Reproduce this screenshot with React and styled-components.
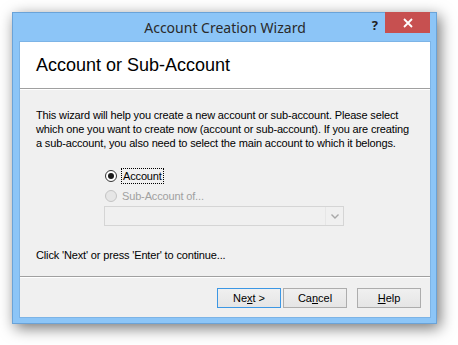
import React from "react"
import styled, { createGlobalStyle } from "styled-components"

const GlobalStyle = createGlobalStyle`
  html, body {
    margin: 0;
    background: #ffffff;
  }
`

const Desktop = styled.div`
  padding: 12px 0 0 12px;
  height: 345px;
  box-sizing: border-box;
`

const Window = styled.div`
  width: 425px;
  height: 312px;
  box-sizing: border-box;
  display: flex;
  flex-direction: column;
  background: #8cc5f7;
  border: 1px solid #6aa3d8;
  padding: 0 6px 6px 7px;
  box-shadow: 3px 4px 14px rgba(0, 0, 0, 0.55);
`

const TitleBar = styled.div`
  height: 29px;
  flex: none;
  display: flex;
  align-items: center;
  justify-content: center;
  position: relative;
  font-family: "Noto Sans", "Open Sans", sans-serif;
  font-size: 14px;
  color: #2a2a2a;
`

const HelpGlyph = styled.span`
  position: absolute;
  right: 52px;
  top: 3px;
  font-family: "Noto Sans", sans-serif;
  font-weight: 700;
  font-size: 13px;
  color: #222;
`

const CloseButton = styled.div`
  position: absolute;
  right: 0;
  top: -1px;
  width: 45px;
  height: 21px;
  background: #c75050;
  display: flex;
  align-items: center;
  justify-content: center;
`

const Client = styled.div`
  flex: 1;
  display: flex;
  flex-direction: column;
  background: #f0f0f0;
  box-shadow: 0 0 0 1px #7db4e6;
  font-family: "Liberation Sans", Arial, sans-serif;
  font-size: 11px;
  letter-spacing: -0.15px;
  color: #000;
`

const Header = styled.div`
  height: 46px;
  flex: none;
  background: #ffffff;
  display: flex;
  align-items: center;
  padding-left: 16px;
  font-size: 18px;
  letter-spacing: 0;
`

const Divider = styled.div`
  height: 1px;
  flex: none;
  background: #a0a0a0;
  border-bottom: 1px solid #ffffff;
`

const Body = styled.div`
  flex: 1;
  padding: 18px 0 0 16px;
`

const Intro = styled.p`
  margin: 0;
  line-height: 14px;
  white-space: nowrap;
`

const Choices = styled.div`
  margin: 18px 0 0 69px;
  display: flex;
  flex-direction: column;
  gap: 4px;
`

const Choice = styled.label`
  display: flex;
  align-items: center;
  gap: 5px;
  height: 16px;
  color: ${(p) => (p.disabled ? "#a0a0a0" : "#000")};
`

const RadioDot = styled.span`
  width: 12px;
  height: 12px;
  box-sizing: border-box;
  border-radius: 50%;
  border: 1px solid ${(p) => (p.disabled ? "#c4c4c4" : "#333")};
  background: ${(p) => (p.disabled ? "#e6e6e6" : "#fff")};
  display: flex;
  align-items: center;
  justify-content: center;
  &::after {
    content: "";
    width: 6px;
    height: 6px;
    border-radius: 50%;
    background: ${(p) => (p.checked ? "#1a1a1a" : "transparent")};
  }
`

const FocusLabel = styled.span`
  outline: 1px dotted #000;
  padding: 0 1px;
  line-height: 14px;
`

const Combo = styled.div`
  width: 240px;
  height: 20px;
  box-sizing: border-box;
  margin: -2px 0 0 -1px;
  border: 1px solid #d5d5d5;
  background: #f0f0f0;
  display: flex;
  justify-content: flex-end;
  align-items: center;
`

const ComboArrow = styled.div`
  width: 17px;
  height: 18px;
  border-left: 1px solid #e6e6e6;
  display: flex;
  align-items: center;
  justify-content: center;
`

const Hint = styled.p`
  margin: 23px 0 0;
`

const Footer = styled.div`
  height: 38px;
  flex: none;
  display: flex;
  align-items: center;
  justify-content: flex-end;
  padding-right: 9px;
  padding-top: 1px;
  gap: 2px;
`

const Button = styled.button`
  width: 64px;
  height: 20px;
  margin-left: ${(p) => (p.$spaced ? "8px" : "0")};
  box-sizing: border-box;
  border: 1px solid ${(p) => (p.$default ? "#3c97e4" : "#adadad")};
  background: linear-gradient(#f0f0f0, #e5e5e5);
  font-family: "Liberation Sans", Arial, sans-serif;
  font-size: 11px;
  color: #000;
  padding: 0;
  u {
    text-decoration: underline;
  }
`

function Close() {
  return (
    <svg width="10" height="10" viewBox="0 0 10 10">
      <path d="M1 1 L9 9 M9 1 L1 9" stroke="#fff" strokeWidth="1.8" />
    </svg>
  )
}

function Chevron() {
  return (
    <svg width="8" height="5" viewBox="0 0 8 5">
      <path d="M0.5 0.5 L4 4 L7.5 0.5" stroke="#a8a8a8" strokeWidth="1.4" fill="none" />
    </svg>
  )
}

export default function App() {
  return (
    <Desktop>
      <GlobalStyle />
      <Window>
        <TitleBar>
          Account Creation Wizard
          <HelpGlyph>?</HelpGlyph>
          <CloseButton>
            <Close />
          </CloseButton>
        </TitleBar>
        <Client>
          <Header>Account or Sub-Account</Header>
          <Divider />
          <Body>
            <Intro>
              This wizard will help you create a new account or sub-account. Please select
              <br />
              which one you want to create now (account or sub-account). If you are creating
              <br />
              a sub-account, you also need to select the main account to which it belongs.
            </Intro>
            <Choices>
              <Choice>
                <RadioDot checked />
                <FocusLabel>Account</FocusLabel>
              </Choice>
              <Choice disabled>
                <RadioDot disabled />
                Sub-Account of...
              </Choice>
              <Combo>
                <ComboArrow>
                  <Chevron />
                </ComboArrow>
              </Combo>
            </Choices>
            <Hint>Click 'Next' or press 'Enter' to continue...</Hint>
          </Body>
          <Divider />
          <Footer>
            <Button $default>
              Ne<u>x</u>t &gt;
            </Button>
            <Button>
              Ca<u>n</u>cel
            </Button>
            <Button $spaced>
              <u>H</u>elp
            </Button>
          </Footer>
        </Client>
      </Window>
    </Desktop>
  )
}
